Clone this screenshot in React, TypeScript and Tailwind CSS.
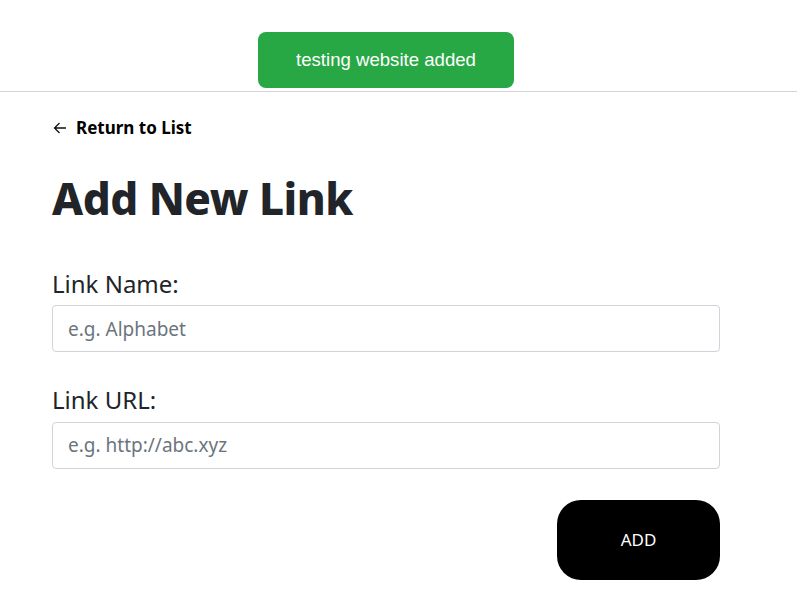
import React from "react";

const ArrowLeft = () => (
  <svg width="16" height="16" viewBox="0 0 16 16" fill="none" stroke="#111" strokeWidth="1.3">
    <path d="M14 8H2.5M7.5 3L2.5 8l5 5" />
  </svg>
);

const App = () => {
  return (
    <div className="relative min-h-[603px] bg-white font-['Noto_Sans',sans-serif] text-[#212529]">
      <div className="absolute left-[258px] top-[32px] flex h-[56px] w-[256px] items-center justify-center rounded-lg bg-[#28a745] font-['Liberation_Sans',sans-serif] text-[18.6px] text-white">
        testing website added
      </div>
      <div className="h-[92px] border-b border-[#d4d4d4]" />
      <div className="w-[668px] ml-[52px]">
        <a className="mt-[23px] flex items-center gap-[8px] text-[17px] font-bold text-black">
          <ArrowLeft />
          <span>Return to List</span>
        </a>
        <h1 className="mt-[31px] text-[44px] font-extrabold leading-[1.2] tracking-[-0.5px]">Add New Link</h1>
        <div className="mt-[44px]">
          <label className="block text-[24px] leading-[1.3]">Link Name:</label>
          <input
            className="mt-[6px] h-[47px] w-full rounded border border-[#ced4da] px-[15px] text-[19px] placeholder:text-[#6c757d]"
            placeholder="e.g. Alphabet"
          />
        </div>
        <div className="mt-[32px]">
          <label className="block text-[24px] leading-[1.3]">Link URL:</label>
          <input
            className="mt-[6px] h-[47px] w-full rounded border border-[#ced4da] px-[15px] text-[19px] placeholder:text-[#6c757d]"
            placeholder="e.g. http://abc.xyz"
          />
        </div>
        <div className="mt-[31px] flex justify-end">
          <button className="h-[80px] w-[163px] rounded-[24px] bg-black text-[17px] text-white">ADD</button>
        </div>
      </div>
    </div>
  );
};

export default App;
